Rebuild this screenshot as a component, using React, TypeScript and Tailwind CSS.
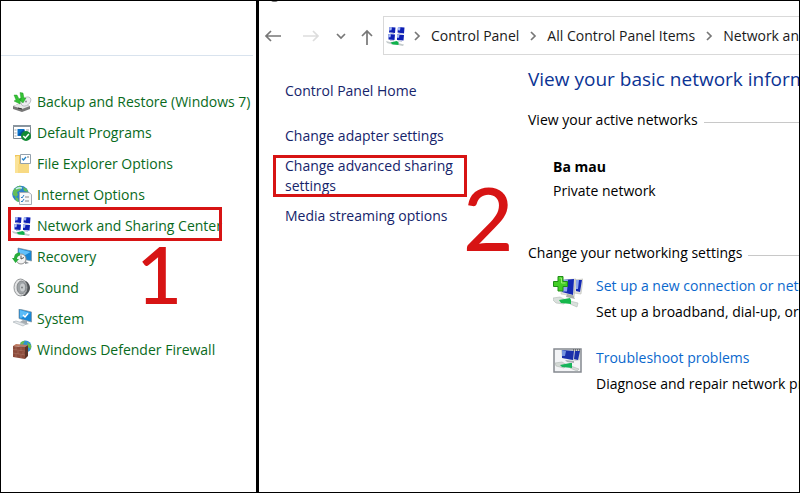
import type { ReactNode } from "react";

function BackupIcon() {
  return (
    <svg viewBox="0 0 20 20" className="size-5 shrink-0" aria-hidden="true">
      <path d="m1 14 8-3 9 3v3l-8 3-9-3z" fill="#777" />
      <path d="m1 14 8-3 9 3-8 3z" fill="#e8e8e8" />
      <ellipse cx="14" cy="9.500" rx="5.500" ry="3.800" transform="rotate(-40 14 9.500)" fill="#ececf0" stroke="#b4b4ba" strokeWidth=".8" />
      <circle cx="14" cy="9.500" r="1" fill="#8d8d95" />
      <path d="M2 3h3l2 4 2-1-1 6-6-3 2-1zM8 .5l3 .5 1 5h2l-3 5-4-4h2z" fill="#35c236" stroke="#159318" strokeWidth=".4" />
      <path d="m6 16 4 1" stroke="#333" strokeWidth="1.200" />
    </svg>
  );
}

function ProgramsIcon() {
  return (
    <svg viewBox="0 0 20 20" className="size-5 shrink-0" aria-hidden="true">
      <path d="M1.500 2.500h17v13h-17z" fill="#fff" stroke="#7b8791" />
      <path d="M1 2h18v2H1z" fill="#8a959e" />
      <path d="M5.500 6h7v7h-7z" fill="#0a71c8" />
      <path d="m6 12 5-5h1.500v6z" fill="#084f9c" />
      <path d="M2.500 7h2m-2 3h2m-2 3h2M14 7h3" stroke="#9aa4ab" />
      <circle cx="14" cy="13" r="5" fill="#128a34" />
      <path d="m11.300 13 2 2 3.600-4" fill="none" stroke="#fff" strokeWidth="1.500" />
    </svg>
  );
}

function FolderIcon() {
  return (
    <svg viewBox="0 0 20 20" className="size-5 shrink-0" aria-hidden="true">
      <path d="M3 1h6v3h8v15H3z" fill="#f0c75b" />
      <path d="M5 2h2v17H3V3z" fill="#fbe397" />
      <path d="M6 10h11v9H6z" fill="#f8da83" />
      <path d="M8.500.500h10v9h-10z" fill="#fff" stroke="#93a1ad" />
      <path d="m10 4.500 1.500 1.500L14 3" fill="none" stroke="#2583c8" strokeWidth="1.300" />
      <path d="M15 3h2" stroke="#777" />
    </svg>
  );
}

function InternetIcon() {
  return (
    <svg viewBox="0 0 20 20" className="size-5 shrink-0" aria-hidden="true">
      <circle cx="8.500" cy="9" r="8.300" fill="#2d82cb" />
      <path d="M1 6q2-4 7-5.500L10 3 7 6 5 7l1 3-2 2-3-2zM11 2l4 2 1 3-4-1zM3 12l3 1 1 4-3-1z" fill="#64bd58" />
      <path d="M4 4q3-2 6-1" stroke="#c8ecff" strokeWidth="1.500" fill="none" />
      <path d="M7.500 7.500h9.500l2.500 2v10h-12z" fill="#f7f8fa" stroke="#a4adb5" />
      <path d="m9 12 1 1 2-3m-3 6 1 1 2-3" stroke="#2c7ec4" fill="none" />
      <path d="M13 12h4m-4 4h4" stroke="#888" />
    </svg>
  );
}

function NetworkIcon() {
  return (
    <svg viewBox="0 0 20 20" className="size-5 shrink-0" aria-hidden="true">
      <path d="m3.500 1 6 .5-.5 5.500-6-.5zM12 1l6.500.5-.5 6-6.500-1zM2.500 8l6.500.5-.5 5.500-6-.5zM11 8.500l7 .5-.5 5.500-6.500-.5z" fill="#0d1fb4" />
      <path d="m3.500 1 2.500.2-.5 3-2.300.3zM12 1l2.500.2-.5 3.300-2.300-.2zM2.500 8l2.500.2-.5 3-2.300 0zM11 8.500l2.500.2-.5 3-2 0z" fill="#a6b9f5" />
      <path d="m4 7 4 .5M12.500 7.500l4 .5M4 14.500l4 .3M12 14.800l4 .5" stroke="#b9bed6" />
      <path d="m0 15 6 1.500v2L1 17zM12 17l6 1.500-1 1.500-5-1z" fill="#c4cbcc" />
      <path d="m4.500 16.500 6-1.500 2 1v3l-6-.5z" fill="#10b04c" />
    </svg>
  );
}

function RecoveryIcon() {
  return (
    <svg viewBox="0 0 20 20" className="size-5 shrink-0" aria-hidden="true">
      <path d="m6 1 13.500 3v10L6 11z" fill="#1684d2" stroke="#80909b" strokeWidth=".7" />
      <path d="m7 2 11.500 3L10 10l-3-1z" fill="#62c0fa" />
      <path d="m13 14 4 2-4 1z" fill="#8b9297" />
      <circle cx="9" cy="12" r="5" fill="#f4f4f4" stroke="#909090" />
      <path d="M9 8.500V12l3-1.500" fill="none" stroke="#555" />
      <path d="M8 5.500Q2 6 2 11H0l3.500 5L7 12H5q0-3 3-3.500z" fill="#28ad3b" />
    </svg>
  );
}

function SoundIcon() {
  return (
    <svg viewBox="0 0 20 20" className="size-5 shrink-0" aria-hidden="true">
      <path d="M8 1.500 14 3q4 3 4 7t-5 8H8z" fill="#4f5356" />
      <ellipse cx="8.500" cy="9.500" rx="6.500" ry="8.500" fill="#e3e4e5" stroke="#96999b" />
      <ellipse cx="9.500" cy="9.500" rx="4.500" ry="6.500" fill="#9da2a5" stroke="#777b7e" strokeWidth=".8" />
      <ellipse cx="10.500" cy="9.500" rx="2.500" ry="4" fill="#c8cbcd" />
      <circle cx="10" cy="9.500" r="1" fill="#7c7f81" />
    </svg>
  );
}

function SystemIcon() {
  return (
    <svg viewBox="0 0 20 20" className="size-5 shrink-0" aria-hidden="true">
      <path d="m7 0 12.500 3v10L7 9.500z" fill="#1787d8" stroke="#81929e" strokeWidth=".7" />
      <path d="m8 1 10.500 3L9 9l-1-.5z" fill="#5bbcf8" />
      <path d="m11 6 2 2 3-3.500" fill="none" stroke="#fff" strokeWidth="1.400" />
      <path d="m11 11 4 1v2l2 1-4 1-5-3z" fill="#a5acb1" />
      <path d="m1 13 3-1 10 3-3 2z" fill="#e5e8ea" stroke="#aeb6bc" strokeWidth=".7" />
    </svg>
  );
}

function FirewallIcon() {
  return (
    <svg viewBox="0 0 20 20" className="size-5 shrink-0" aria-hidden="true">
      <circle cx="13.500" cy="6.500" r="6" fill="#2e91d0" />
      <path d="m9 2 4-1.500-2 4-3 1zM15 2l4 3v4l-3-2z" fill="#69bd49" />
      <path d="m1 6 12 1v12L1 17z" fill="#8c4b3b" />
      <path d="m13 7 3-2v11l-3 3z" fill="#5c3327" />
      <path d="M1 9.500 13 11M1 13l12 2M4 6.500V10m5-2.500V11m-3 0v3m5-2v3m-7-1.500V17m5-2v3" stroke="#b98773" strokeWidth=".4" />
      <path d="m1 6 3-2 12 1-3 2z" fill="#bd7a61" />
    </svg>
  );
}

function ConnectionIcon() {
  return (
    <svg viewBox="0 0 30 32" className="h-8 w-[30px] shrink-0" aria-hidden="true">
      <path d="m9 4 14-1-2 18-6-2-7-1zM22 4l8-1-2 15-7-1z" fill="#e3e3df" stroke="#b9bab5" strokeWidth=".6" />
      <path d="m10 4 11-1-1 16-11-3zM23 4h6l-2 12-4-1z" fill="#1429b4" />
      <path d="m10 4 5-.5-1 12H9zM23 4h3l-1 9h-2z" fill="#8ea6ee" />
      <path d="m14 18-1 3 9 2-2-4z" fill="#aab0ac" />
      <path d="m0 22 7-1 6 3-2 4-8-1-3-3zM17 25l8 2-1 4-7-3z" fill="#d9e0dc" stroke="#b1bab5" strokeWidth=".6" />
      <path d="m6 24 11-2 1 2v4l-10-1z" fill="#16b84b" />
      <path d="M5 .500h5v5h4.500v5H10V15H5v-4.500H.500v-5H5z" fill="#42ce25" stroke="#208d18" />
      <path d="M6.500 2h2v5h4" fill="none" stroke="#9bed76" />
    </svg>
  );
}

function TroubleshootIcon() {
  return (
    <svg viewBox="0 0 30 26" className="h-[26px] w-[30px] shrink-0" aria-hidden="true">
      <path d="M1 1h27v23H1z" fill="#f3f4f6" stroke="#858990" strokeWidth="1.500" />
      <path d="M8 2h19v10l-4 1-14-3z" fill="#cdd1d5" />
      <path d="m9 2 12 1-1 9-11-2zM22 3h5l-2 9-4-1z" fill="#1b30aa" />
      <path d="m9 2 4 1-1 5-3 0z" fill="#7694df" />
      <path d="M20 2h7" stroke="#333" strokeDasharray="1 1" />
      <path d="m12 12 9 1v2l-7-1z" fill="#a9afb3" />
      <path d="m2 15 7-1 5 3-3 3-8-2zM18 18l8 3-2 2-7-3z" fill="#d3d9d5" stroke="#a7afab" strokeWidth=".5" />
      <path d="m7 17 10-2h2v5l-10-1z" fill="#16b45a" />
    </svg>
  );
}

function Arrow({ label, className, d }: { label: string; className: string; d: string }) {
  return (
    <button type="button" aria-label={label} className={`flex h-5 items-center justify-center ${className}`}>
      <svg viewBox="0 0 18 18" className="size-[18px] shrink-0" fill="none" stroke="currentColor" strokeWidth="1.700">
        <path d={d} />
      </svg>
    </button>
  );
}

function Separator() {
  return (
    <svg viewBox="0 0 8 10" className="h-[10px] w-2 shrink-0" fill="none" stroke="#777" strokeWidth="1.700" aria-hidden="true">
      <path d="m2 1 4 4-4 4" />
    </svg>
  );
}

const tools: { name: string; icon: ReactNode; marked?: boolean }[] = [
  { name: "Backup and Restore (Windows 7)", icon: <BackupIcon /> },
  { name: "Default Programs", icon: <ProgramsIcon /> },
  { name: "File Explorer Options", icon: <FolderIcon /> },
  { name: "Internet Options", icon: <InternetIcon /> },
  { name: "Network and Sharing Center", icon: <NetworkIcon />, marked: true },
  { name: "Recovery", icon: <RecoveryIcon /> },
  { name: "Sound", icon: <SoundIcon /> },
  { name: "System", icon: <SystemIcon /> },
  { name: "Windows Defender Firewall", icon: <FirewallIcon /> },
];

function ToolList() {
  return (
    <section className="w-[255px] shrink-0 overflow-hidden pr-[3px]">
      <div className="h-[55px] border-b border-[#d9e3ee]" />
      <ul className="overflow-hidden pt-[30px] pl-[11px]">
        {tools.map((tool) => (
          <li key={tool.name} className="relative h-[31px]">
            <a href="#" className="flex h-[31px] items-center gap-[5px] whitespace-nowrap text-[#096a1c]">
              {tool.icon}
              {tool.name}
            </a>
            {tool.marked && (
              <>
                <span className="pointer-events-none absolute -left-1 -top-[3px] h-[34px] w-[214px] border-3 border-[#d71414]" />
                <span className="pointer-events-none absolute left-[124px] top-[25px] font-[Lato,sans-serif] text-[80px] leading-[76px] font-medium text-[#d71414]">
                  1
                </span>
              </>
            )}
          </li>
        ))}
      </ul>
    </section>
  );
}

function AddressBar() {
  return (
    <header className="flex h-[54px] items-end overflow-hidden">
      <nav aria-label="History" className="flex h-[39px] w-[124px] shrink-0 items-center pl-[5px] text-[#777]">
        <Arrow label="Back" className="w-[18px]" d="M17 9H2m5-5L2 9l5 5" />
        <Arrow label="Forward" className="ml-5 w-[18px] text-[#ddd]" d="M1 9h15m-5-5 5 5-5 5" />
        <Arrow label="Recent locations" className="ml-3 w-[18px]" d="m5 7 4 4 4-4" />
        <Arrow label="Up" className="ml-2 w-[18px]" d="M9 18V4M4 9l5-5 5 5" />
      </nav>
      <nav
        aria-label="Address"
        className="flex h-[39px] min-w-0 grow items-center overflow-hidden border border-r-0 border-[#d9d9d9] pl-[2px] whitespace-nowrap text-[#1a1a1a]"
      >
        <NetworkIcon />
        <span className="flex items-center gap-[10px] pl-[7px]">
          <Separator />
          <a href="#">Control Panel</a>
          <Separator />
          <a href="#">All Control Panel Items</a>
          <Separator />
          <a href="#">Network and Sharing Center</a>
        </span>
      </nav>
    </header>
  );
}

function Sidebar() {
  return (
    <nav aria-label="Tasks" className="flex w-[255px] shrink-0 flex-col items-start pt-[26px] pl-[26px] leading-5 text-[#15246b]">
      <a href="#">Control Panel Home</a>
      <a href="#" className="mt-[25px]">Change adapter settings</a>
      <span className="relative mt-[10px]">
        <a href="#" className="block w-[180px]">Change advanced sharing settings</a>
        <span className="pointer-events-none absolute -left-3 -top-px h-[42px] w-[194px] border-3 border-[#d71414]" />
        <span className="pointer-events-none absolute left-[178px] top-[22px] font-[Lato,sans-serif] text-[87px] leading-[80px] font-medium text-[#d71414]">
          2
        </span>
      </span>
      <a href="#" className="mt-[10px]">Media streaming options</a>
    </nav>
  );
}

function SectionTitle({ children }: { children: ReactNode }) {
  return (
    <h2 className="flex items-center gap-[6px] leading-5">
      {children}
      <span className="mt-1 h-px grow bg-[#c8c8c8]" />
    </h2>
  );
}

function Task({ icon, title, text }: { icon: ReactNode; title: string; text: string }) {
  return (
    <li className="flex h-[46px] gap-[13px] leading-5">
      {icon}
      <div>
        <a href="#" className="block text-[#0a68cd]">{title}</a>
        <p className="mt-[6px]">{text}</p>
      </div>
    </li>
  );
}

function NetworkOverview() {
  return (
    <main className="min-w-0 grow overflow-hidden pt-[10px] pl-[14px] whitespace-nowrap text-black">
      <h1 className="text-[19px] leading-7 text-[#0b3394]">View your basic network information and set up connections</h1>
      <div className="mt-[17px]">
        <SectionTitle>View your active networks</SectionTitle>
      </div>
      <div className="pt-[25px] pl-[25px] leading-6">
        <p className="font-bold">Ba mau</p>
        <p>Private network</p>
      </div>
      <div className="pt-[40px]">
        <SectionTitle>Change your networking settings</SectionTitle>
      </div>
      <ul className="flex flex-col gap-[26px] pt-[13px] pl-[25px]">
        <Task
          icon={<ConnectionIcon />}
          title="Set up a new connection or network"
          text="Set up a broadband, dial-up, or VPN connection; or set up a router or access point."
        />
        <Task
          icon={<TroubleshootIcon />}
          title="Troubleshoot problems"
          text="Diagnose and repair network problems, or get troubleshooting information."
        />
      </ul>
    </main>
  );
}

export default function App() {
  return (
    <div className="flex min-h-screen overflow-hidden border border-black bg-white font-['Open_Sans','Noto_Sans',sans-serif] text-[14px]">
      <ToolList />
      <div className="w-[3px] shrink-0 bg-black" />
      <section className="relative flex min-w-0 grow flex-col overflow-hidden">
        <span className="absolute -top-1 left-3 h-[5px] w-[7px] rounded-full bg-[#777]" />
        <AddressBar />
        <div className="flex min-w-0">
          <Sidebar />
          <NetworkOverview />
        </div>
      </section>
    </div>
  );
}
